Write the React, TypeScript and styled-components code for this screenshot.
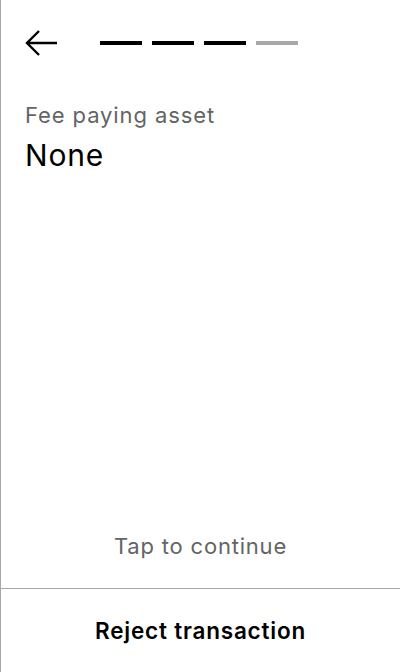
import React from "react";
import styled, { createGlobalStyle } from "styled-components";

const Global = createGlobalStyle`
  html, body { margin: 0; padding: 0; background: #fff; }
  body { font-family: Inter, "Noto Sans", sans-serif; }
  #root { height: 672px; }
`;

const Screen = styled.div`
  box-sizing: border-box;
  width: 400px;
  height: 672px;
  border-left: 1px solid #a8a8a8;
  display: flex;
  flex-direction: column;
  background: #fff;
`;

const Header = styled.div`
  display: flex;
  align-items: center;
  height: 86px;
  padding: 0 0 0 23px;
  gap: 42px;
`;

const BackButton = styled.button`
  border: none;
  background: none;
  padding: 0;
  width: 34px;
  height: 28px;
  display: flex;
  align-items: center;
  justify-content: center;
  cursor: pointer;
`;

const Steps = styled.div`
  display: flex;
  gap: 10px;
`;

const Step = styled.div<{ $done: boolean }>`
  width: 42px;
  height: 4px;
  background: ${(p) => (p.$done ? "#000" : "#a8a8a8")};
`;

const Content = styled.div`
  flex: 1;
  padding: 15px 24px 0;
  display: flex;
  flex-direction: column;
`;

const Label = styled.div`
  font-size: 22px;
  letter-spacing: 0.9px;
  color: #646464;
  line-height: 28px;
`;

const Value = styled.div`
  font-size: 30px;
  letter-spacing: 0.8px;
  color: #000;
  line-height: 40px;
  margin-top: 6px;
`;

const Hint = styled.div`
  text-align: center;
  font-size: 22px;
  letter-spacing: 0.8px;
  color: #646464;
  padding-bottom: 29px;
`;

const Footer = styled.button`
  border: none;
  border-top: 1px solid #a8a8a8;
  background: #fff;
  height: 84px;
  width: 100%;
  font-family: inherit;
  font-size: 22.5px;
  letter-spacing: 0.8px;
  font-weight: 600;
  color: #000;
  cursor: pointer;
`;

export default function App() {
  const steps = [true, true, true, false];
  return (
    <>
      <Global />
      <Screen>
        <Header>
          <BackButton aria-label="Back">
            <svg width="34" height="28" viewBox="0 0 34 28" fill="none">
              <path d="M33 14H3M15 2L3 14l12 12" stroke="#000" strokeWidth="2.4" />
            </svg>
          </BackButton>
          <Steps>
            {steps.map((d, i) => (
              <Step key={i} $done={d} />
            ))}
          </Steps>
        </Header>
        <Content>
          <Label>Fee paying asset</Label>
          <Value>None</Value>
        </Content>
        <Hint>Tap to continue</Hint>
        <Footer>Reject transaction</Footer>
      </Screen>
    </>
  );
}
